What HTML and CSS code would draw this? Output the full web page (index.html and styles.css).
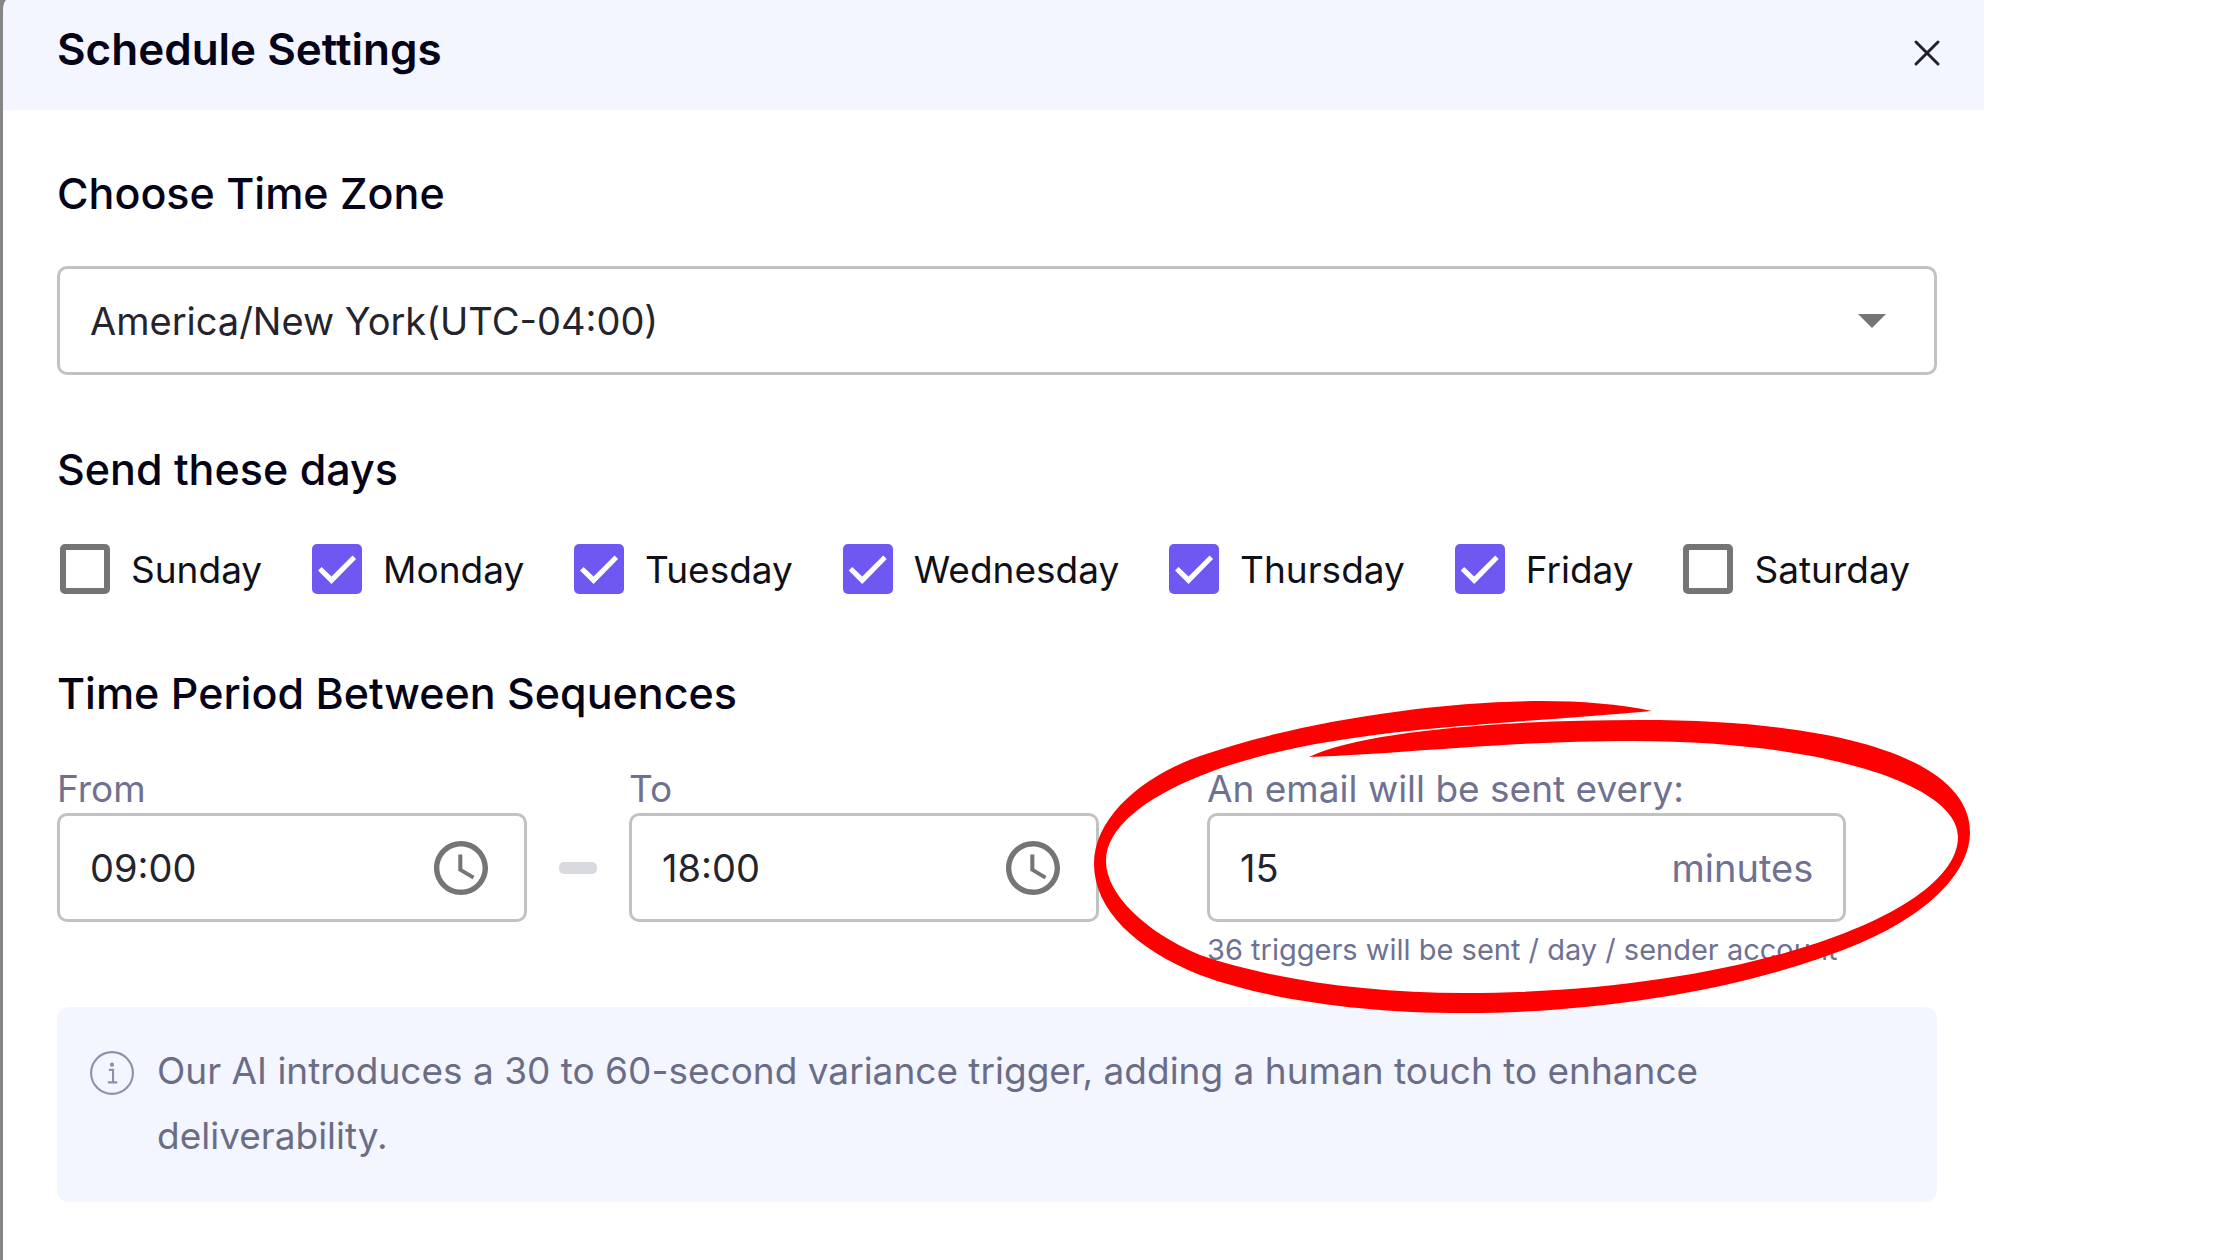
FILE: index.html
```html
<!DOCTYPE html>
<html lang="en">
<head>
    <meta charset="UTF-8">
    <meta name="viewport" content="width=device-width, initial-scale=1.0">
    <title>Schedule Settings</title>
    <link rel="stylesheet" href="styles.css">
</head>
<body>
    <div class="backdrop">
        <main class="dialog">
            <header class="dialog-header">
                <h1>Schedule Settings</h1>
                <button type="button" class="close-btn" aria-label="Close">
                    <svg viewBox="0 0 28 28"><path d="M3 3l22 22M25 3L3 25" fill="none" stroke="#20202c" stroke-width="3" stroke-linecap="round"/></svg>
                </button>
            </header>
            <form class="dialog-body">
                <h2><label for="timezone">Choose Time Zone</label></h2>
                <div class="select-box">
                    <select id="timezone" name="timezone">
                        <option>America/New York(UTC-04:00)</option>
                    </select>
                    <span class="arrow"></span>
                </div>

                <h2 id="days_title">Send these days</h2>
                <div class="days" role="group" aria-labelledby="days_title">
                    <label><input type="checkbox" name="sunday">Sunday</label>
                    <label><input type="checkbox" name="monday" checked>Monday</label>
                    <label><input type="checkbox" name="tuesday" checked>Tuesday</label>
                    <label><input type="checkbox" name="wednesday" checked>Wednesday</label>
                    <label><input type="checkbox" name="thursday" checked>Thursday</label>
                    <label><input type="checkbox" name="friday" checked>Friday</label>
                    <label><input type="checkbox" name="saturday">Saturday</label>
                </div>

                <h2>Time Period Between Sequences</h2>
                <div class="period">
                    <div class="field">
                        <label for="from">From</label>
                        <div class="input-box">
                            <input type="text" id="from" name="from" value="09:00">
                            <button type="button" class="clock-btn" aria-label="Choose start time">
                                <svg viewBox="0 0 20 20" fill="#757575"><path d="M9.99 0C4.47 0 0 4.48 0 10s4.47 10 9.99 10C15.52 20 20 15.52 20 10S15.52 0 9.99 0zM10 18c-4.42 0-8-3.58-8-8s3.58-8 8-8 8 3.58 8 8-3.58 8-8 8z"/><path d="M10.5 5H9v6l5.25 3.15.75-1.23-4.5-2.67z"/></svg>
                            </button>
                        </div>
                    </div>
                    <span class="dash"></span>
                    <div class="field">
                        <label for="to">To</label>
                        <div class="input-box">
                            <input type="text" id="to" name="to" value="18:00">
                            <button type="button" class="clock-btn" aria-label="Choose end time">
                                <svg viewBox="0 0 20 20" fill="#757575"><path d="M9.99 0C4.47 0 0 4.48 0 10s4.47 10 9.99 10C15.52 20 20 15.52 20 10S15.52 0 9.99 0zM10 18c-4.42 0-8-3.58-8-8s3.58-8 8-8 8 3.58 8 8-3.58 8-8 8z"/><path d="M10.5 5H9v6l5.25 3.15.75-1.23-4.5-2.67z"/></svg>
                            </button>
                        </div>
                    </div>
                    <div class="field interval">
                        <label for="interval">An email will be sent every:</label>
                        <div class="input-box">
                            <input type="text" inputmode="numeric" id="interval" name="interval" value="15">
                            <span class="unit">minutes</span>
                        </div>
                        <p class="hint">36 triggers will be sent / day / sender account</p>
                        <!-- hand drawn circle round the interval -->
                        <svg class="marker" viewBox="1090 698 884 320" fill="#ff0000" aria-hidden="true">
                            <path d="M1652 712C1620 705 1580 702 1542 702C1440 702 1300 722 1200 757C1143 777 1094 818 1094 865C1094 910 1135 950 1200 976C1265 1000 1360 1014 1465 1014C1600 1014 1750 990 1858 945C1925 917 1970 875 1970 833C1970 765 1855 721 1640 721C1500 721 1360 733 1309 758C1404 755 1500 742 1634 742C1820 742 1958 785 1958 838C1958 915 1740 994 1465 994C1365 994 1270 980 1200 956C1145 933 1106 895 1106 862C1106 829 1145 799 1200 777C1320 728 1490 727 1652 712Z"/>
                        </svg>
                    </div>
                </div>

                <div class="info">
                    <svg viewBox="0 0 44 44" fill="none" stroke="#8f90a6" stroke-width="2"><circle cx="22" cy="22" r="20"/><path d="M19 19h4v12M18 31h9"/><circle cx="22" cy="14" r="1"/></svg>
                    <p>Our AI introduces a 30 to 60-second variance trigger, adding a human touch to enhance deliverability.</p>
                </div>
            </form>
        </main>
    </div>
</body>
</html>
```

FILE: styles.css
```css
* {
    box-sizing: border-box;
}
body {
    margin: 0;
    background: #fff;
    font-family: Inter, "Liberation Sans", sans-serif;
    font-size: 37px;
    color: #101018;
}
h1, h2, p {
    margin: 0;
}
input, select, button {
    font: inherit;
    color: #24242e;
    border: none;
    background: none;
    padding: 0;
    margin: 0;
}
.backdrop {
    width: calc(100% - 256px);
    min-height: 100vh;
    padding-left: 3px;
    background: #868686;
    display: flex;
}
.dialog {
    flex: 1;
    min-width: 0;
    background: #fff;
    border-top-left-radius: 4px 12px;
    overflow: hidden;
}
.dialog-header {
    display: flex;
    align-items: center;
    justify-content: space-between;
    height: 110px;
    padding: 0 39px 4px 54px;
    background: #f3f5ff;
}
h1, h2 {
    line-height: 60px;
    color: #040318;
}
h1 {
    font-size: 44px;
    font-weight: 600;
    padding-bottom: 8px;
}
h2 {
    font-size: 43px;
    font-weight: 500;
}
.close-btn {
    width: 36px;
    height: 36px;
    padding: 4px;
    cursor: pointer;
}
.close-btn svg, .clock-btn svg {
    display: block;
    width: 100%;
}
.dialog-body {
    padding: 53px 47px 54px 54px;
}
.select-box, .input-box {
    display: flex;
    align-items: center;
    height: 109px;
    border: 3px solid #c2c2c2;
    border-radius: 10px;
    font-size: 38px;
}
.select-box {
    position: relative;
    margin: 43px 0 64px;
}
.select-box select {
    width: 100%;
    height: 100%;
    padding: 0 30px;
    appearance: none;
}
.arrow {
    position: absolute;
    right: 48px;
    border: 14px solid transparent;
    border-top-color: #757575;
    border-bottom: none;
    pointer-events: none;
}
.days {
    display: flex;
    justify-content: space-between;
    margin: 40px 27px 64px 3px;
}
.days label {
    display: flex;
    align-items: center;
    gap: 21px;
    height: 60px;
}
.days input {
    width: 50px;
    height: 50px;
    border: 6px solid #757575;
    border-radius: 5px;
    appearance: none;
}
.days input:checked {
    border: none;
    background: #6f58f1;
}
.days input:checked::before {
    content: "";
    display: block;
    height: 100%;
    background: #fff;
    clip-path: polygon(39% 80%, 12% 53%, 19% 46%, 39% 65%, 81% 23%, 88% 30%);
}
.period {
    display: flex;
    align-items: flex-start;
    margin-top: 42px;
}
.field {
    flex: 0 0 25%;
    min-width: 0;
}
.field label {
    display: block;
    line-height: 48px;
    color: #6f7191;
}
.input-box {
    justify-content: space-between;
    padding: 0 30px;
}
.input-box input {
    flex: 1;
    min-width: 0;
}
.clock-btn {
    width: 60px;
    margin-right: 3px;
    padding: 3px;
    cursor: pointer;
}
.dash {
    width: 38px;
    height: 12px;
    margin: 97px 32px 0;
    border-radius: 5px;
    background: #d9d9e0;
}
.interval {
    position: relative;
    flex-basis: 34%;
    margin-left: 108px;
}
.unit {
    color: #6f7191;
}
.hint {
    margin-top: 8px;
    font-size: 29px;
    line-height: 40px;
    color: #6f7191;
    white-space: nowrap;
}
.marker {
    position: absolute;
    top: -68px;
    left: -117px;
    width: 884px;
    pointer-events: none;
}
.info {
    display: flex;
    gap: 22px;
    margin-top: 37px;
    padding: 31px 32px 34px;
    border-radius: 12px;
    background: #f3f5ff;
}
.info svg {
    flex: none;
    width: 46px;
    height: 46px;
    margin-top: 12px;
}
.info p {
    line-height: 65px;
    color: #6b6c86;
}
```
